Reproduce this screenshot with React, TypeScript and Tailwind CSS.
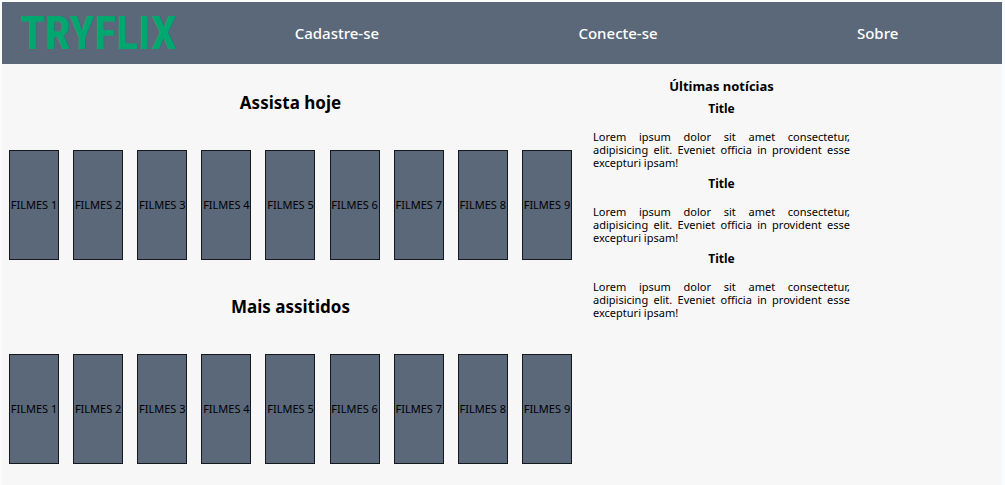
const movies = [1, 2, 3, 4, 5, 6, 7, 8, 9];
const news = [1, 2, 3];
const links = ["Cadastre-se", "Conecte-se", "Sobre"];

function MovieRow({ title }: { title: string }) {
  return (
    <section>
      <h2 className="pt-6 text-center text-[17px] leading-7 font-bold">{title}</h2>
      <ul className="mt-[33px] flex justify-around pb-[9px]">
        {movies.map((n) => (
          <li
            key={n}
            className="flex h-[110px] w-[50px] items-center justify-center border border-[#15191e] bg-[#5a687a] text-[11px] whitespace-nowrap"
          >
            FILMES {n}
          </li>
        ))}
      </ul>
    </section>
  );
}

export default function App() {
  return (
    <div className="min-h-screen bg-[#fbfcfd] pr-[3px] pl-0.5 font-['Noto_Sans','Open_Sans',sans-serif] text-black">
      <div className="min-h-screen border-t-2 border-[#fbfcfd] bg-[#f7f7f7]">
        <header className="flex h-[62px] items-center bg-[#5a687a]">
          <a
            href="#"
            className="flex w-[193px] shrink-0 justify-center font-['Roboto_Condensed','Liberation_Sans_Narrow',sans-serif] text-[46px] leading-none font-bold text-[#00a870]"
          >
            TRYFLIX
          </a>
          <nav className="flex flex-1 justify-around pr-1">
            {links.map((label) => (
              <a key={label} href="#" className="text-[15px] font-medium text-white">
                {label}
              </a>
            ))}
          </nav>
        </header>
        <div className="grid grid-cols-[577fr_285fr_138fr]">
          <main className="pt-px">
            <MovieRow title="Assista hoje" />
            <MovieRow title="Mais assitidos" />
          </main>
          <aside className="px-3.5 pt-3">
            <h3 className="mb-px text-center text-[13px] leading-5 font-bold">Últimas notícias</h3>
            {news.map((n) => (
              <article key={n}>
                <h4 className="pt-1 text-center text-[12px] leading-4 font-bold">Title</h4>
                <p className="pt-[13px] pb-[3px] text-justify text-[11px] leading-[13px]">
                  Lorem ipsum dolor sit amet consectetur, adipisicing elit. Eveniet officia in
                  provident esse excepturi ipsam!
                </p>
              </article>
            ))}
          </aside>
        </div>
      </div>
    </div>
  );
}
